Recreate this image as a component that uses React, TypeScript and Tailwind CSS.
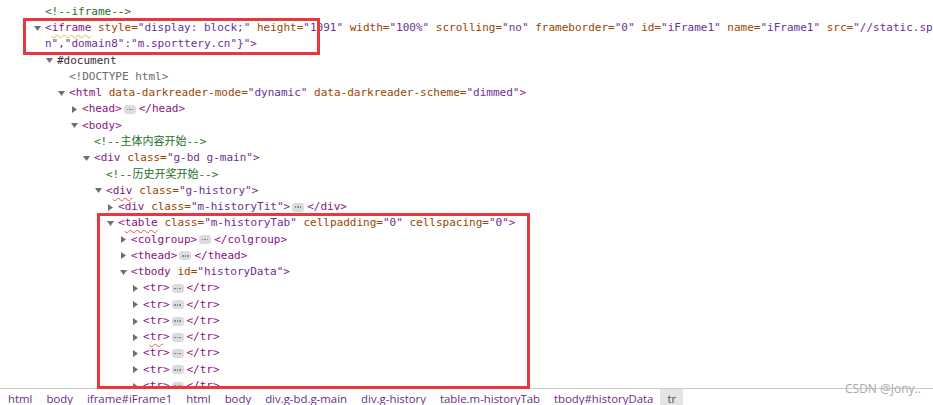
import React from "react";

const TAG = "text-[#881280]";
const ATTR = "text-[#994500]";
const VAL = "text-[#6b3093]";
const CMT = "text-[#236e25]";

const PADS = [
  "pl-[34px]",
  "pl-[46px]",
  "pl-[58px]",
  "pl-[71px]",
  "pl-[83px]",
  "pl-[95px]",
  "pl-[107px]",
  "pl-[120px]",
  "pl-[132px]",
];

function Down() {
  return (
    <svg width="7" height="5" viewBox="0 0 7 5" className="block">
      <path d="M0 0H7L3.5 5Z" fill="#6f6f6f" />
    </svg>
  );
}

function Right() {
  return (
    <svg width="5" height="7" viewBox="0 0 5 7" className="block ml-[1px]">
      <path d="M0 0L5 3.5L0 7Z" fill="#6f6f6f" />
    </svg>
  );
}

function Badge() {
  return (
    <span className="inline-flex items-center justify-center gap-[1px] w-[12px] h-[9px] rounded-[3px] bg-[#dcdcdc] ml-[2px] mr-[3px] shrink-0">
      <span className="w-[1.5px] h-[1.5px] rounded-full bg-[#777]" />
      <span className="w-[1.5px] h-[1.5px] rounded-full bg-[#777]" />
      <span className="w-[1.5px] h-[1.5px] rounded-full bg-[#777]" />
    </span>
  );
}

function Row({
  level,
  tri,
  children,
}: {
  level: number;
  tri?: "down" | "right";
  children: React.ReactNode;
}) {
  return (
    <div className={`flex items-center h-[16.27px] whitespace-nowrap ${PADS[level]}`}>
      <span className="w-[11px] shrink-0 flex items-center">
        {tri === "down" ? <Down /> : tri === "right" ? <Right /> : null}
      </span>
      <span className="flex items-center">{children}</span>
    </div>
  );
}

function Attr({ name, value }: { name: string; value: string }) {
  return (
    <>
      {" "}
      <span className={ATTR}>{name}=</span>
      <span className={VAL}>"{value}"</span>
    </>
  );
}

function Open({
  name,
  wavy,
  children,
}: {
  name: string;
  wavy?: string;
  children?: React.ReactNode;
}) {
  return (
    <span className="whitespace-pre">
      <span className={TAG}>&lt;</span>
      <span className={`${TAG} ${wavy ?? ""}`}>{name}</span>
      {children}
      <span className={TAG}>&gt;</span>
    </span>
  );
}

function Close({ name }: { name: string }) {
  return <span className={`${TAG} whitespace-pre`}>&lt;/{name}&gt;</span>;
}

const WAVY_RED = "underline decoration-wavy decoration-[#e5584a] underline-offset-[3px] decoration-1";
const WAVY_YEL = "underline decoration-wavy decoration-[#d9bd2a] underline-offset-[3px] decoration-1";

function Crumb({ children, active }: { children: React.ReactNode; active?: boolean }) {
  return (
    <span className={`px-[7px] h-full flex items-center pt-[3px] whitespace-nowrap text-[#6b2c84] ${active ? "bg-[#e4e4e4]" : ""}`}>
      {children}
    </span>
  );
}

const WRAP_TAIL = 'n","domain8":"m.sporttery.cn"}"';

export default function App() {
  return (
    <div className="relative w-[933px] h-[405px] overflow-hidden bg-white">
      <div className="h-[388px] overflow-hidden text-[11px] leading-[16.27px] text-[#303030] [font-family:'DejaVu_Sans_Mono','Noto_Sans_CJK_SC',monospace]">
        <div className="h-[3.87px] overflow-hidden">
          <div className="-mt-[12.4px] h-[16.27px] pl-[47px] flex items-center whitespace-nowrap">
            <span className={CMT}>内容</span>
          </div>
        </div>

        <Row level={0}>
          <span className={CMT}>&lt;!--iframe--&gt;</span>
        </Row>
        <Row level={0} tri="down">
          <Open name="iframe" wavy={WAVY_YEL}>
            <Attr name="style" value="display: block;" />
            <Attr name="height" value="1091" />
            <Attr name="width" value="100%" />
            <Attr name="scrolling" value="no" />
            <Attr name="frameborder" value="0" />
            <Attr name="id" value="iFrame1" />
            <Attr name="name" value="iFrame1" />
            {" "}
            <span className={ATTR}>src=</span>
            <span className={VAL}>"//static.sporttery.cn/res_1_0/jcw/default/html/kj/dlt.html?</span>
          </Open>
        </Row>
        <Row level={0}>
          <span className="whitespace-pre">
            <span className={VAL}>{WRAP_TAIL}</span>
            <span className={TAG}>&gt;</span>
          </span>
        </Row>
        <Row level={1} tri="down">
          <span className="text-[#303030]">#document</span>
        </Row>
        <Row level={2}>
          <span className="text-[#6a6a6a]">&lt;!DOCTYPE html&gt;</span>
        </Row>
        <Row level={2} tri="down">
          <Open name="html">
            <Attr name="data-darkreader-mode" value="dynamic" />
            <Attr name="data-darkreader-scheme" value="dimmed" />
          </Open>
        </Row>
        <Row level={3} tri="right">
          <Open name="head" />
          <Badge />
          <Close name="head" />
        </Row>
        <Row level={3} tri="down">
          <Open name="body" />
        </Row>
        <Row level={4}>
          <span className={CMT}>&lt;!--主体内容开始--&gt;</span>
        </Row>
        <Row level={4} tri="down">
          <Open name="div">
            <Attr name="class" value="g-bd g-main" />
          </Open>
        </Row>
        <Row level={5}>
          <span className={CMT}>&lt;!--历史开奖开始--&gt;</span>
        </Row>
        <Row level={5} tri="down">
          <Open name="div" wavy={WAVY_RED}>
            <Attr name="class" value="g-history" />
          </Open>
        </Row>
        <Row level={6} tri="right">
          <Open name="div">
            <Attr name="class" value="m-historyTit" />
          </Open>
          <Badge />
          <Close name="div" />
        </Row>
        <Row level={6} tri="down">
          <Open name="table" wavy={WAVY_RED}>
            <Attr name="class" value="m-historyTab" />
            <Attr name="cellpadding" value="0" />
            <Attr name="cellspacing" value="0" />
          </Open>
        </Row>
        <Row level={7} tri="right">
          <Open name="colgroup" />
          <Badge />
          <Close name="colgroup" />
        </Row>
        <Row level={7} tri="right">
          <Open name="thead" />
          <Badge />
          <Close name="thead" />
        </Row>
        <Row level={7} tri="down">
          <Open name="tbody">
            <Attr name="id" value="historyData" />
          </Open>
        </Row>
        {[0, 1, 2, 3, 4, 5, 6].map((i) => (
          <Row key={i} level={8} tri="right">
            <Open name="tr" wavy={i === 3 ? WAVY_RED : undefined} />
            <Badge />
            <Close name="tr" />
          </Row>
        ))}
      </div>

      <div className="h-[17px] border-t border-[#cccccc] flex items-stretch pl-[1px] text-[11.4px] leading-[14px] [font-family:'Open_Sans','Noto_Sans',sans-serif]">
        <Crumb>html</Crumb>
        <Crumb>body</Crumb>
        <Crumb>iframe#iFrame1</Crumb>
        <Crumb>html</Crumb>
        <Crumb>body</Crumb>
        <Crumb>div.g-bd.g-main</Crumb>
        <Crumb>div.g-history</Crumb>
        <Crumb>table.m-historyTab</Crumb>
        <Crumb>tbody#historyData</Crumb>
        <Crumb active>tr</Crumb>
      </div>

      <div className="absolute left-[23px] top-[18px] w-[297px] h-[37px] border-[3px] border-[#e8383d]" />
      <div className="absolute left-[97px] top-[213px] w-[433px] h-[176px] border-[3px] border-[#e8383d]" />

      <div className="absolute left-[845px] top-[381px] text-[12px] leading-[16px] text-[#a8a8a8] [font-family:'Open_Sans','Noto_Sans',sans-serif]">
        CSDN @Jony..
      </div>
    </div>
  );
}
